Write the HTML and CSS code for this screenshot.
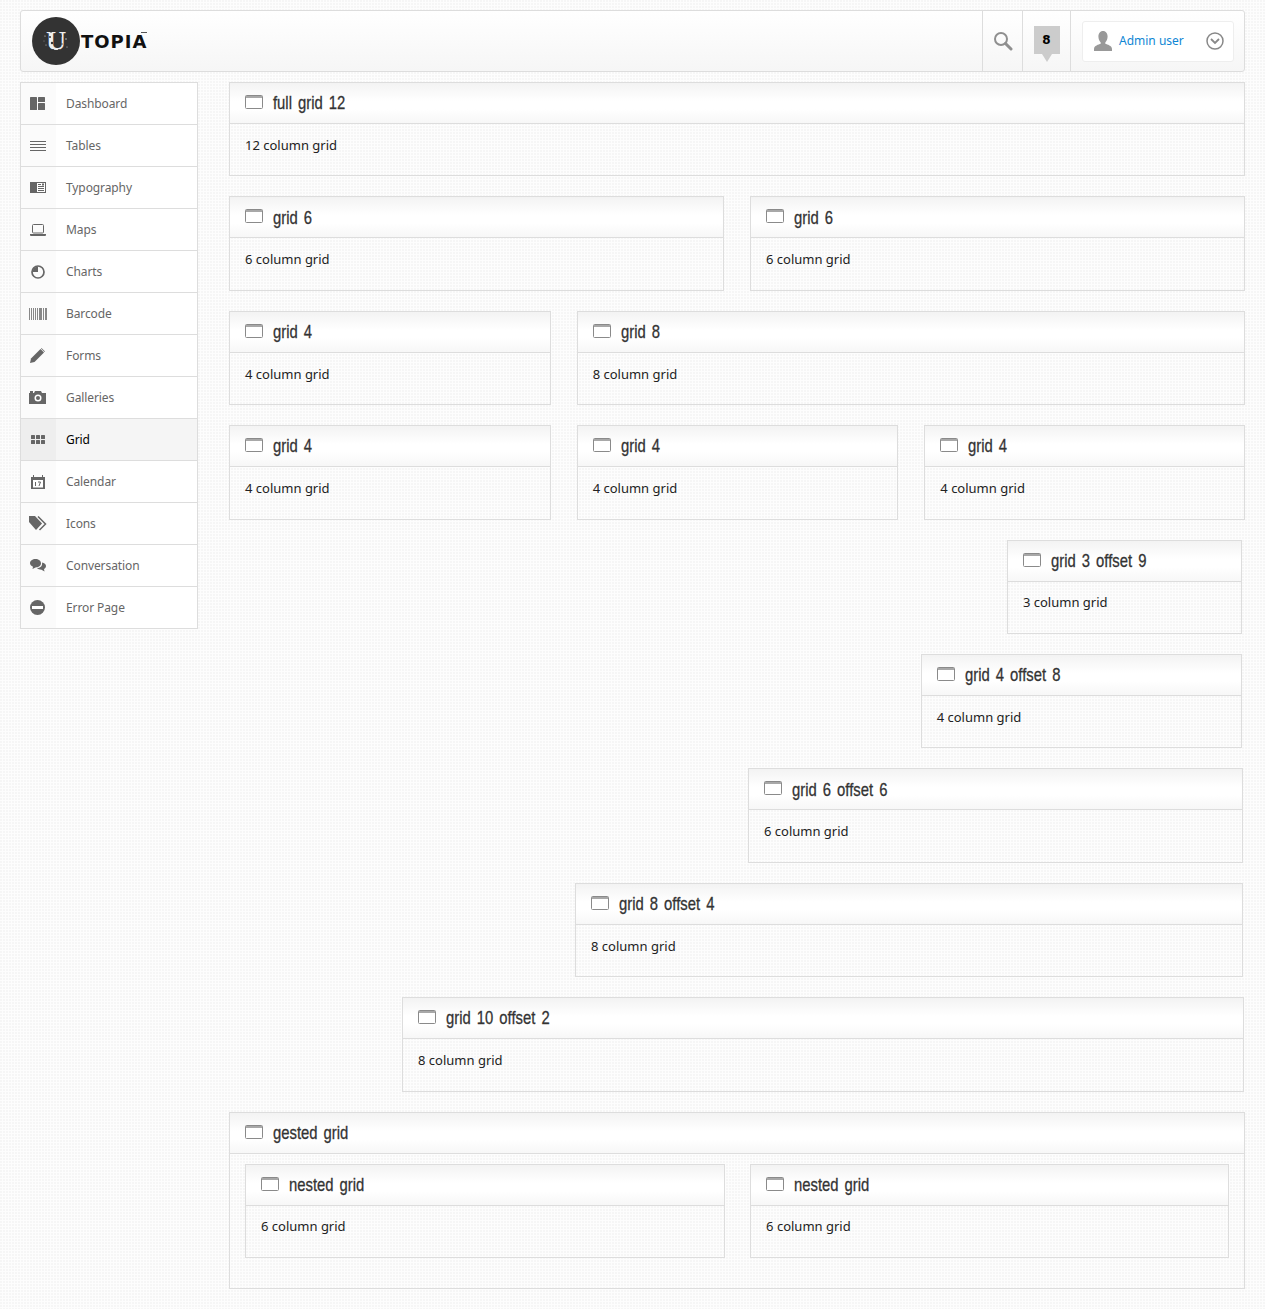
FILE: index.html
```html
<!DOCTYPE html>
<html lang="en">
<head>
<meta charset="utf-8">
<title>Utopia - Grid</title>
<link rel="stylesheet" href="styles.css">
</head>
<body>
<svg class="defs" aria-hidden="true">
  <symbol id="win" viewBox="0 0 18 14"><rect x=".5" y=".5" width="17" height="13" rx="1" fill="#fff" stroke="#8a8a8a"/><rect x="1" y="1" width="16" height="2" fill="#a8a8a8"/></symbol>
</svg>
<header class="topbar">
  <div class="logo">
    <span class="logo-mark">U
      <svg class="specks" width="48" height="48" viewBox="0 0 48 48"><g fill="#333"><circle cx="18" cy="20" r="1"/><circle cx="20" cy="26" r="1.200"/><circle cx="17" cy="31" r=".8"/><circle cx="29" cy="19" r=".8"/><circle cx="21" cy="33" r="1"/><circle cx="27" cy="33" r=".9"/><circle cx="19" cy="15" r=".8"/><circle cx="30" cy="27" r=".7"/></g><g fill="#ddd"><circle cx="13" cy="19" r=".6"/><circle cx="14" cy="28" r=".5"/><circle cx="34" cy="22" r=".7"/><circle cx="35" cy="30" r=".5"/><circle cx="12" cy="24" r=".4"/><circle cx="33" cy="16" r=".4"/></g></svg>
    </span>
    <span class="logo-text">TOPIA</span>
  </div>
  <div class="top-actions">
    <div class="top-cell search">
      <svg width="20" height="20" viewBox="0 0 20 20"><circle cx="8" cy="8" r="6" fill="none" stroke="#8f8f8f" stroke-width="2"/><path d="M12.5 12.5 18 18" stroke="#8f8f8f" stroke-width="3" stroke-linecap="round"/></svg>
    </div>
    <div class="top-cell notify"><span class="badge">8</span></div>
    <div class="top-cell user-cell">
      <div class="user">
        <svg width="18" height="20" viewBox="0 0 18 20"><path d="M9 0c3 0 4.600 2.500 4.600 5.500 0 2.500-1 4.500-2.300 6v1.300c2 .8 6.700 1.800 6.700 5.200v2H0v-2c0-3.400 4.700-4.400 6.700-5.200v-1.300C5.400 10 4.400 8 4.400 5.500 4.400 2.500 6 0 9 0z" fill="#999"/></svg>
        <span class="user-name">Admin user</span>
        <svg class="chev" width="18" height="18" viewBox="0 0 18 18"><circle cx="9" cy="9" r="8" fill="none" stroke="#888" stroke-width="1.500"/><path d="M5 7 9 11 13 7" fill="none" stroke="#888" stroke-width="1.800"/></svg>
      </div>
    </div>
  </div>
</header>
<div class="layout">
  <nav class="sidebar">
    <a class="nav-item"><span class="nav-icon"><svg width="15" height="13" viewBox="0 0 15 13" fill="#666"><rect width="7" height="13" rx=".5"/><rect x="8" width="7" height="5" rx=".5"/><rect x="8" y="6" width="7" height="7" rx=".5"/></svg></span><span>Dashboard</span></a>
    <a class="nav-item"><span class="nav-icon"><svg width="16" height="10" viewBox="0 0 16 10" fill="#666"><rect width="16" height="1"/><rect y="3" width="16" height="1"/><rect y="6" width="16" height="1"/><rect y="9" width="16" height="1"/></svg></span><span>Tables</span></a>
    <a class="nav-item"><span class="nav-icon"><svg width="16" height="11" viewBox="0 0 16 11"><rect width="16" height="11" fill="#666"/><rect x="7" y="1" width="8" height="9" fill="#fff"/><path d="M8 2.500h3M8 4.500h6M8 6.500h6M8 8.500h6" stroke="#666"/><rect x="12" y="1.500" width="2" height="2" fill="#666"/></svg></span><span>Typography</span></a>
    <a class="nav-item"><span class="nav-icon"><svg width="16" height="12" viewBox="0 0 16 12"><rect x="2.500" y=".5" width="11" height="8.500" rx="1" fill="none" stroke="#666"/><path d="M0 10h16v1a1 1 0 0 1-1 1H1a1 1 0 0 1-1-1z" fill="#666"/></svg></span><span>Maps</span></a>
    <a class="nav-item"><span class="nav-icon"><svg width="14" height="14" viewBox="0 0 14 14"><circle cx="7" cy="7" r="6" fill="none" stroke="#666" stroke-width="1.700"/><path d="M7 7V1.500A5.500 5.500 0 0 0 1.500 7z" fill="#666"/></svg></span><span>Charts</span></a>
    <a class="nav-item"><span class="nav-icon"><svg width="18" height="12" viewBox="0 0 18 12" fill="#888"><rect width="1" height="12"/><rect x="2" width="1" height="12"/><rect x="4" width="1" height="12"/><rect x="6" width="1" height="12"/><rect x="8" width="1" height="12"/><rect x="10" width="3" height="12"/><rect x="14" width="1" height="12"/><rect x="16" width="2" height="12"/></svg></span><span>Barcode</span></a>
    <a class="nav-item"><span class="nav-icon"><svg width="15" height="15" viewBox="0 0 15 15" fill="#666"><path d="M0 15l1-4.500L10.500 1l3.500 3.500L4.500 14z"/><path d="M11.500 0 15 3.500l-.5.5L11 .5z"/></svg></span><span>Forms</span></a>
    <a class="nav-item"><span class="nav-icon"><svg width="17" height="13" viewBox="0 0 17 13"><path d="M0 2h1V0h3v2h1l1-2h6l1 2h4v11H0z" fill="#666"/><circle cx="9" cy="7" r="3.500" fill="#fff"/><circle cx="9" cy="7" r="2" fill="#666"/></svg></span><span>Galleries</span></a>
    <a class="nav-item active"><span class="nav-icon"><svg width="14" height="9" viewBox="0 0 14 9" fill="#666"><rect width="4" height="4" rx=".5"/><rect x="5" width="4" height="4" rx=".5"/><rect x="10" width="4" height="4" rx=".5"/><rect y="5" width="4" height="4" rx=".5"/><rect x="5" y="5" width="4" height="4" rx=".5"/><rect x="10" y="5" width="4" height="4" rx=".5"/></svg></span><span>Grid</span></a>
    <a class="nav-item"><span class="nav-icon"><svg width="14" height="14" viewBox="0 0 14 14"><path d="M0 2h2V0h1v2h8V0h1v2h2v12H0z" fill="#666"/><rect x="2" y="5" width="10" height="7.500" fill="#fff"/><path d="M4.500 7v4M7 7h2.500L8 11" fill="none" stroke="#666"/></svg></span><span>Calendar</span></a>
    <a class="nav-item"><span class="nav-icon"><svg width="18" height="15" viewBox="0 0 18 15"><path d="M0 0h6l7 7.500L7 14 0 6z" fill="#666"/><path d="M9 0.500l7.500 7.500-6 6" fill="none" stroke="#666" stroke-width="1.500"/></svg></span><span>Icons</span></a>
    <a class="nav-item"><span class="nav-icon"><svg width="16" height="13" viewBox="0 0 16 13" fill="#666"><path d="M5.500 0C8.500 0 11 1.700 11 4.200S8.500 8.400 5.500 8.400L2.500 10l.5-2.300C1.200 7 0 5.700 0 4.200 0 1.700 2.500 0 5.500 0z"/><path d="M12 3.500c2.300.5 4 1.800 4 3.500 0 1.300-.8 2.300-2 3l.5 2.500-3-1.800c-2 0-3.500-.6-4.500-1.700 3 0 5.700-1.700 5-5.500z"/></svg></span><span>Conversation</span></a>
    <a class="nav-item"><span class="nav-icon"><svg width="15" height="15" viewBox="0 0 15 15"><circle cx="7.500" cy="7.500" r="7.500" fill="#666"/><rect x="2" y="6" width="11" height="3" fill="#fff"/></svg></span><span>Error Page</span></a>
  </nav>
  <main class="content">
    <div class="row">
      <section class="panel w12"><h3 class="panel-head"><svg class="win"><use href="#win"/></svg><span class="title">full grid 12</span></h3><div class="panel-body">12 column grid</div></section>
    </div>
    <div class="row">
      <section class="panel w6"><h3 class="panel-head"><svg class="win"><use href="#win"/></svg><span class="title">grid 6</span></h3><div class="panel-body">6 column grid</div></section>
      <section class="panel w6 next"><h3 class="panel-head"><svg class="win"><use href="#win"/></svg><span class="title">grid 6</span></h3><div class="panel-body">6 column grid</div></section>
    </div>
    <div class="row">
      <section class="panel w4"><h3 class="panel-head"><svg class="win"><use href="#win"/></svg><span class="title">grid 4</span></h3><div class="panel-body">4 column grid</div></section>
      <section class="panel w8 next"><h3 class="panel-head"><svg class="win"><use href="#win"/></svg><span class="title">grid 8</span></h3><div class="panel-body">8 column grid</div></section>
    </div>
    <div class="row">
      <section class="panel w4"><h3 class="panel-head"><svg class="win"><use href="#win"/></svg><span class="title">grid 4</span></h3><div class="panel-body">4 column grid</div></section>
      <section class="panel w4 next"><h3 class="panel-head"><svg class="win"><use href="#win"/></svg><span class="title">grid 4</span></h3><div class="panel-body">4 column grid</div></section>
      <section class="panel w4 next"><h3 class="panel-head"><svg class="win"><use href="#win"/></svg><span class="title">grid 4</span></h3><div class="panel-body">4 column grid</div></section>
    </div>
    <div class="row">
      <section class="panel w3 off9"><h3 class="panel-head"><svg class="win"><use href="#win"/></svg><span class="title">grid 3 offset 9</span></h3><div class="panel-body">3 column grid</div></section>
    </div>
    <div class="row">
      <section class="panel w4 off8"><h3 class="panel-head"><svg class="win"><use href="#win"/></svg><span class="title">grid 4 offset 8</span></h3><div class="panel-body">4 column grid</div></section>
    </div>
    <div class="row">
      <section class="panel w6 off6"><h3 class="panel-head"><svg class="win"><use href="#win"/></svg><span class="title">grid 6 offset 6</span></h3><div class="panel-body">6 column grid</div></section>
    </div>
    <div class="row">
      <section class="panel w8 off4"><h3 class="panel-head"><svg class="win"><use href="#win"/></svg><span class="title">grid 8 offset 4</span></h3><div class="panel-body">8 column grid</div></section>
    </div>
    <div class="row">
      <section class="panel w10 off2"><h3 class="panel-head"><svg class="win"><use href="#win"/></svg><span class="title">grid 10 offset 2</span></h3><div class="panel-body">8 column grid</div></section>
    </div>
    <div class="row outer-row">
      <section class="panel w12"><h3 class="panel-head"><svg class="win"><use href="#win"/></svg><span class="title">gested grid</span></h3>
        <div class="panel-body nested-body">
          <div class="row nested-row">
            <section class="panel nested-a"><h3 class="panel-head"><svg class="win"><use href="#win"/></svg><span class="title">nested grid</span></h3><div class="panel-body">6 column grid</div></section>
            <section class="panel nested-b next"><h3 class="panel-head"><svg class="win"><use href="#win"/></svg><span class="title">nested grid</span></h3><div class="panel-body">6 column grid</div></section>
          </div>
        </div>
      </section>
    </div>
  </main>
</div>
</body>
</html>
```
FILE: styles.css
```css
* { box-sizing: border-box; }
html, body { margin: 0; }
body {
  height: 1309px;
  overflow: hidden;
  padding: 10px 20px 0;
  background-color: #fdfdfd;
  background-image: radial-gradient(circle at 1px 1px, #f6f6f6 1px, transparent 1px);
  background-size: 3px 3px;
  font-family: "Noto Sans", "Open Sans", sans-serif;
  color: #333;
}
.defs { display: none; }

.topbar {
  display: flex;
  justify-content: space-between;
  height: 62px;
  border: 1px solid #ddd;
  border-radius: 3px;
  background: linear-gradient(#fff, #f6f6f6);
}
.logo { display: flex; align-items: center; padding-left: 11px; }
.logo-mark {
  position: relative;
  width: 48px; height: 48px;
  border-radius: 50%;
  background: #333;
  color: #eee;
  display: flex; align-items: center; justify-content: center;
  font: bold 28px "Liberation Serif", serif;
}
.specks { position: absolute; left: 0; top: 0; }
.logo-text {
  position: relative;
  margin-left: 1px;
  font: bold 18px "DejaVu Sans", sans-serif;
  color: #111;
  letter-spacing: 1px;
}
.logo-text::after {
  content: "";
  position: absolute;
  right: 0; top: 1px;
  width: 6px; height: 1px;
  background: #555;
}
.top-actions { display: flex; }
.top-cell {
  display: flex; align-items: center; justify-content: center;
  border-left: 1px solid #ddd;
}
.search { width: 40px; }
.notify { width: 48px; padding-bottom: 2px; }
.badge {
  position: relative;
  width: 26px; height: 28px;
  background: #ccc;
  color: #000;
  font: bold 12px/28px "DejaVu Sans", sans-serif;
  text-align: center;
}
.badge::after {
  content: "";
  position: absolute;
  left: 8px; top: 28px;
  border: 5px solid transparent;
  border-top: 8px solid #ccc;
  border-bottom: 0;
}
.user-cell { width: 174px; padding: 0 10px 0 11px; }
.user {
  flex: 1;
  display: flex; align-items: center;
  height: 41px;
  padding: 0 9px 0 11px;
  background: #fff;
  border: 1px solid #eee;
  border-radius: 3px;
}
.user-name { margin: 0 0 2px 7px; font-size: 12px; color: #0e86d4; }
.chev { margin-left: auto; }

.layout { display: flex; align-items: flex-start; margin-top: 10px; }
.sidebar {
  flex: 0 0 178px;
  border: 1px solid #ddd;
  border-bottom: 0;
  background: #fff;
}
.nav-item {
  display: flex; align-items: center;
  height: 42px;
  border-bottom: 1px solid #ddd;
  font-size: 12px;
  letter-spacing: -.1px;
  color: #666;
}
.nav-icon {
  flex: 0 0 35px;
  align-self: stretch;
  display: flex; align-items: center; justify-content: center;
  margin-right: 10px;
  padding-right: 2px;
  background: #fbfbfb;
}
.nav-item.active { background: #f5f5f5; color: #000; }
.nav-item.active .nav-icon { background: #eee; }

.content { flex: 0 0 1016px; margin-left: 31px; }
.row { display: flex; margin-bottom: 20px; height: 94.4px; }
.outer-row { height: auto; }
.panel { border: 1px solid #ddd; background: transparent; }
.panel-head {
  display: flex; align-items: center;
  height: 41px;
  margin: 0;
  padding-left: 15px;
  border-bottom: 1px solid #ddd;
  background: linear-gradient(#f3f3f3, #fff 45%, #fff 65%, #f7f7f7);
  font-weight: normal;
}
.title {
  display: inline-block;
  margin-top: .4px;
  font: normal 19px "Liberation Sans", sans-serif;
  word-spacing: 2.500px;
  color: #333;
  white-space: nowrap;
  -webkit-text-stroke: .3px #333;
  transform: scaleX(.78);
  transform-origin: left center;
}
.win { width: 18px; height: 14px; margin: 0 10px 2px 0; }
.panel-body { padding: 10.8px 15px; font-size: 13px; line-height: 20px; color: #222; }

.w12 { width: 100%; }
.w10 { width: 82.9%; }
.w8 { width: 65.75%; }
.w6 { width: 48.718%; }
.w4 { width: 31.66%; flex-shrink: 0; }
.w4:last-child { width: 31.6%; }
.w3 { width: 23.1%; }
.next { margin-left: 2.56%; }
.off9 { margin-left: 76.57%; }
.off8 { margin-left: 68.08%; }
.off6 { margin-left: 51.08%; }
.off4 { margin-left: 34.06%; }
.off2 { margin-left: 17.03%; }

.nested-body { padding: 10px 15px 30px; }
.nested-row { margin-bottom: 0; }
.nested-a { width: 48.8%; }
.nested-b { width: 48.7%; }
```
